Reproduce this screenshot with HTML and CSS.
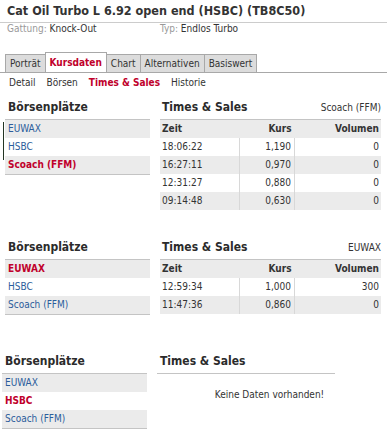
FILE: index.html
```html
<!DOCTYPE html>
<html lang="de">
<head>
    <meta charset="UTF-8">
    <meta name="viewport" content="width=device-width, initial-scale=1.0">
    <title>Cat Oil Turbo L 6.92 open end - Times &amp; Sales</title>
    <link rel="stylesheet" href="styles.css">
</head>
<body>

<h1 class="title">Cat Oil Turbo L 6.92 open end (HSBC) (TB8C50)</h1>

<div class="meta">
  <span class="meta-item"><span class="meta-label">Gattung:</span> Knock-Out</span>
  <span class="meta-item"><span class="meta-label">Typ:</span> Endlos Turbo</span>
</div>

<ul class="tabs">
  <li class="tab">Porträt</li>
  <li class="tab tab-active">Kursdaten</li>
  <li class="tab">Chart</li>
  <li class="tab">Alternativen</li>
  <li class="tab">Basiswert</li>
</ul>

<ul class="subnav">
  <li>Detail</li>
  <li>Börsen</li>
  <li class="subnav-active">Times &amp; Sales</li>
  <li>Historie</li>
</ul>

<!-- Scoach (FFM) -->
<section class="market">
  <div class="venues">
    <div class="block-head"><h2 class="block-title">Börsenplätze</h2></div>
    <ul class="venue-list has-edge">
      <li class="venue">EUWAX</li>
      <li class="venue">HSBC</li>
      <li class="venue venue-active">Scoach (FFM)</li>
    </ul>
  </div>
  <div class="trades">
    <div class="block-head">
      <h2 class="block-title">Times &amp; Sales</h2>
      <span class="block-source">Scoach (FFM)</span>
    </div>
    <table class="trades-table">
      <thead>
        <tr><th class="col-time">Zeit</th><th class="col-price">Kurs</th><th class="col-vol">Volumen</th></tr>
      </thead>
      <tbody>
        <tr><td class="col-time">18:06:22</td><td class="col-price">1,190</td><td class="col-vol">0</td></tr>
        <tr><td class="col-time">16:27:11</td><td class="col-price">0,970</td><td class="col-vol">0</td></tr>
        <tr><td class="col-time">12:31:27</td><td class="col-price">0,880</td><td class="col-vol">0</td></tr>
        <tr><td class="col-time">09:14:48</td><td class="col-price">0,630</td><td class="col-vol">0</td></tr>
      </tbody>
    </table>
  </div>
</section>

<!-- EUWAX -->
<section class="market market-second">
  <div class="venues">
    <div class="block-head"><h2 class="block-title">Börsenplätze</h2></div>
    <ul class="venue-list">
      <li class="venue venue-active">EUWAX</li>
      <li class="venue">HSBC</li>
      <li class="venue">Scoach (FFM)</li>
    </ul>
  </div>
  <div class="trades">
    <div class="block-head">
      <h2 class="block-title">Times &amp; Sales</h2>
      <span class="block-source">EUWAX</span>
    </div>
    <table class="trades-table">
      <thead>
        <tr><th class="col-time">Zeit</th><th class="col-price">Kurs</th><th class="col-vol">Volumen</th></tr>
      </thead>
      <tbody>
        <tr><td class="col-time">12:59:34</td><td class="col-price">1,000</td><td class="col-vol">300</td></tr>
        <tr><td class="col-time">11:47:36</td><td class="col-price">0,860</td><td class="col-vol">0</td></tr>
      </tbody>
    </table>
  </div>
</section>

<!-- HSBC -->
<section class="market market-empty">
  <div class="venues">
    <div class="block-head"><h2 class="block-title">Börsenplätze</h2></div>
    <ul class="venue-list">
      <li class="venue">EUWAX</li>
      <li class="venue venue-active">HSBC</li>
      <li class="venue">Scoach (FFM)</li>
    </ul>
  </div>
  <div class="trades">
    <div class="block-head">
      <h2 class="block-title">Times &amp; Sales</h2>
    </div>
    <p class="no-data">Keine Daten vorhanden!</p>
  </div>
</section>

</body>
</html>
```

FILE: styles.css
```css
body {
    margin: 0;
    font-family: "DejaVu Sans Condensed", "DejaVu Sans", sans-serif;
    font-size: 10px;
    color: #333;
    background: #fff;
}
.title {
    margin: 0;
    padding: 0 7px;
    font-size: 12.5px;
    line-height: 22px;
    color: #333;
    border-bottom: 1px solid #ccc;
}
.meta {
    display: flex;
    padding-left: 7px;
    line-height: 11px;
}
.meta-item:first-child {
    width: 153px;
}
.meta-label {
    color: #999;
}
.tabs {
    list-style: none;
    margin: 18px 0 0;
    padding: 0 0 0 5px;
    display: flex;
    align-items: flex-end;
    border-bottom: 1px solid #a8a8a8;
}
.tab {
    margin-left: -1px;
    padding: 0 4px;
    line-height: 17px;
    background: #dcdcdc;
    border: 1px solid #a8a8a8;
    border-bottom: 0;
}
.tab:first-child {
    margin-left: 0;
}
.tab-active {
    line-height: 19px;
    background: #fff;
    color: #c0002b;
    font-weight: bold;
}
.subnav {
    list-style: none;
    margin: 0;
    padding: 4px 0 0 9px;
    display: flex;
    gap: 11px;
    line-height: 12px;
}
.subnav-active {
    color: #c0002b;
    font-weight: bold;
}
.market {
    display: flex;
    margin: 10px 0 0 5px;
}
.market-second {
    margin-top: 29px;
}
.market-empty {
    margin: 38px 0 0 2px;
}
.venues {
    width: 145px;
    margin-right: 10px;
}
.trades {
    width: 221px;
}
.market-empty .trades {
    width: 225px;
}
.block-head {
    display: flex;
    justify-content: space-between;
    align-items: baseline;
    padding: 0 0 3px 3px;
    border-bottom: 1px solid #c4c4c4;
}
.trades .block-head {
    padding-left: 2px;
}
.market-empty .trades .block-head {
    margin-right: 47px;
    padding-left: 3px;
}
.block-title {
    margin: 0;
    font-size: 12px;
    line-height: 17px;
    color: #2b2b2b;
}
.venue-list {
    position: relative;
    list-style: none;
    margin: 0;
    padding: 0;
    border-bottom: 1px solid #c4c4c4;
}
.has-edge::before {
    content: "";
    position: absolute;
    left: -2px;
    top: 2px;
    width: 1px;
    height: 38px;
    background: #243524;
}
.venue {
    padding-left: 3px;
    line-height: 18px;
    color: #2c5d9b;
}
.venue:nth-child(odd) {
    background: #ebebeb;
}
.venue-active {
    color: #c0002b;
    font-weight: bold;
}
.trades-table {
    width: 100%;
    border-collapse: collapse;
}
.trades-table th,
.trades-table td {
    padding: 0 2px;
    line-height: 18px;
    color: #333;
}
.trades-table th {
    background: #ebebeb;
    font-weight: bold;
}
.trades-table td + td {
    border-left: 1px solid #d8d8d8;
}
.trades-table tbody tr:nth-child(even) {
    background: #ebebeb;
}
.col-time {
    width: 75px;
    text-align: left;
}
.col-price {
    width: 49px;
    text-align: right;
}
.trades-table .col-price {
    padding-right: 3px;
}
.col-vol {
    text-align: right;
}
.no-data {
    margin: 0;
    padding-top: 15px;
    line-height: 12px;
    text-align: center;
}
```
